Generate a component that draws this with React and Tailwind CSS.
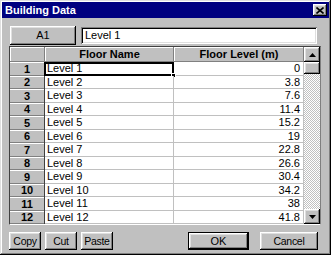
import React from "react";

const rows = [
  ["Level 1", "0"],
  ["Level 2", "3.8"],
  ["Level 3", "7.6"],
  ["Level 4", "11.4"],
  ["Level 5", "15.2"],
  ["Level 6", "19"],
  ["Level 7", "22.8"],
  ["Level 8", "26.6"],
  ["Level 9", "30.4"],
  ["Level 10", "34.2"],
  ["Level 11", "38"],
  ["Level 12", "41.8"],
];

const raised =
  "shadow-[inset_-1px_-1px_#000,inset_1px_1px_#fff,inset_-2px_-2px_#808080,inset_2px_2px_#dfdfdf]";
const raisedThin = "shadow-[inset_-1px_-1px_#808080,inset_1px_1px_#fff]";

function Btn({ children, className = "" }) {
  return (
    <div
      className={`h-[18px] flex items-center justify-center bg-[#c0c0c0] text-[10.5px] tracking-[-0.3px] ${raised} ${className}`}
    >
      {children}
    </div>
  );
}

function Arrow({ up }) {
  return (
    <svg width="7" height="4" viewBox="0 0 7 4">
      {up ? (
        <polygon points="3.5,0 7,4 0,4" fill="#000" />
      ) : (
        <polygon points="0,0 7,0 3.5,4" fill="#000" />
      )}
    </svg>
  );
}

export default function App() {
  return (
    <div className="w-[331px] h-[255px] bg-[#c0c0c0] p-[2px] flex flex-col font-['Liberation_Sans',Arial,sans-serif] text-[11px] text-black leading-none shadow-[inset_-1px_-1px_#000,inset_1px_1px_#dfdfdf,inset_-2px_-2px_#808080,inset_2px_2px_#fff]">
      {/* title bar */}
      <div className="h-[16px] bg-[#000080] flex items-center justify-between pl-[3px] pr-[2px]">
        <span className="text-white font-bold text-[11px]">Building Data</span>
        <div
          className={`w-[14px] h-[12px] bg-[#c0c0c0] flex items-center justify-center ${raised}`}
        >
          <svg width="8" height="7" viewBox="0 0 8 7">
            <path d="M0.5 0.5 L7.5 6.5 M7.5 0.5 L0.5 6.5" stroke="#000" strokeWidth="1.6" />
          </svg>
        </div>
      </div>

      <div className="flex flex-col px-[7px]">
        {/* A1 row */}
        <div className="mt-[8px] h-[19px] flex items-center">
          <div
            className={`ml-[1px] w-[66px] h-[19px] flex items-center justify-center bg-[#c0c0c0] ${raised}`}
          >
            A1
          </div>
          <div className="ml-[5px] w-[236px] h-[17px] bg-white flex items-center pl-[4px] shadow-[inset_1px_1px_#808080,inset_-1px_-1px_#fff,inset_2px_2px_#000,inset_-2px_-2px_#dfdfdf]">
            Level 1
          </div>
        </div>

        {/* grid */}
        <div className="mt-[1px] w-[312px] h-[179px] border border-t-[#404040] border-l-[#404040] border-b-[#fff] border-r-[#808080] flex">
          <div className="w-[294px] flex flex-col">
            <div className="h-[15px] flex">
              <div className={`w-[35px] bg-[#c0c0c0] ${raisedThin}`} />
              <div
                className={`w-[129px] bg-[#c0c0c0] flex items-center justify-center font-bold ${raisedThin}`}
              >
                Floor Name
              </div>
              <div
                className={`w-[130px] bg-[#c0c0c0] flex items-center justify-center font-bold ${raisedThin}`}
              >
                Floor Level (m)
              </div>
            </div>
            {rows.map(([name, level], i) => (
              <div key={i} className={`flex ${i % 2 === 0 ? "h-[14px]" : "h-[13px]"}`}>
                <div
                  className={`w-[35px] bg-[#c0c0c0] flex items-center justify-center font-bold border-r border-r-[#404040] shadow-[inset_0_-1px_#808080,inset_0_1px_#fff]`}
                >
                  {i + 1}
                </div>
                <div className="relative w-[129px] bg-white flex items-center pl-[2px] border-r border-b border-[#c0c0c0]">
                  {name}
                  {i === 0 && (
                    <>
                      <div className="absolute left-[-1px] top-0 right-[-1px] bottom-[-1px] border-2 border-black" />
                      <div className="absolute right-[-3px] bottom-[-3px] w-[5px] h-[5px] bg-black border border-white" />
                    </>
                  )}
                </div>
                <div className="w-[130px] bg-white flex items-center justify-end pr-[3px] border-r border-b border-[#c0c0c0]">
                  {level}
                </div>
              </div>
            ))}
          </div>
          {/* scrollbar */}
          <div className="w-[16px] flex flex-col bg-[repeating-conic-gradient(#c0c0c0_0%_25%,#fff_0%_50%)] bg-[length:2px_2px]">
            <div className={`h-[15px] bg-[#c0c0c0] flex items-center justify-center ${raised}`}>
              <Arrow up />
            </div>
            <div className={`h-[12px] bg-[#c0c0c0] ${raised}`} />
            <div className="flex-1" />
            <div className={`h-[15px] bg-[#c0c0c0] flex items-center justify-center ${raised}`}>
              <Arrow />
            </div>
          </div>
        </div>

        {/* buttons */}
        <div className="mt-[7px] flex items-center">
          <Btn className="w-[32px]">Copy</Btn>
          <Btn className="ml-[4px] w-[32px]">Cut</Btn>
          <Btn className="ml-[4px] w-[32px]">Paste</Btn>
          <div className="ml-[75px] w-[61px] h-[18px] border border-black">
            <div
              className={`w-full h-full flex items-center justify-center bg-[#c0c0c0] ${raised}`}
            >
              OK
            </div>
          </div>
          <Btn className="ml-[11px] w-[58px]">Cancel</Btn>
        </div>
      </div>
    </div>
  );
}
